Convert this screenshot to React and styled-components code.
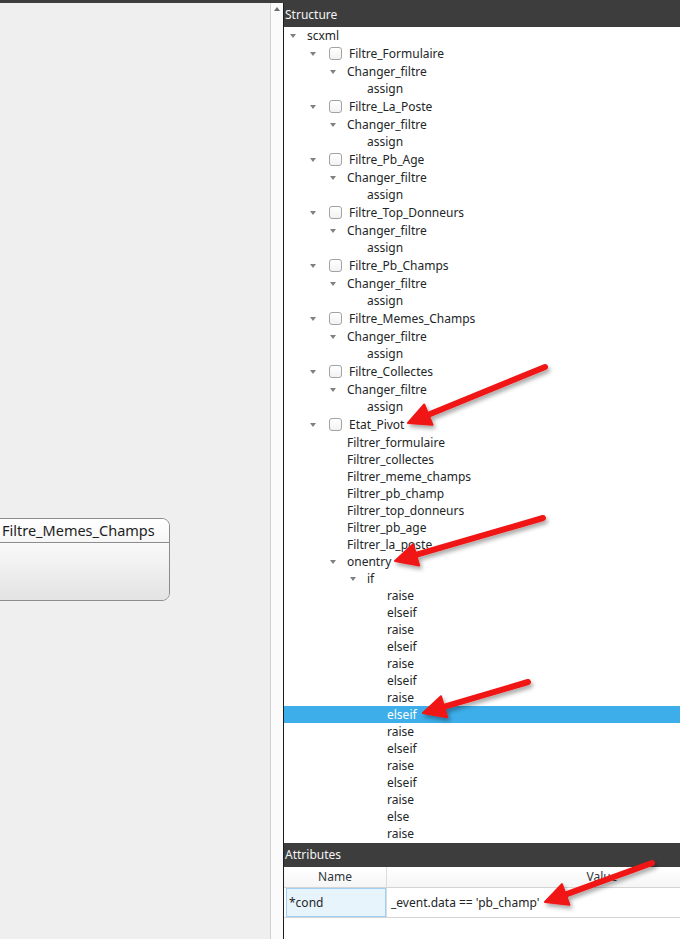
import React from "react";
import styled, { createGlobalStyle } from "styled-components";

const GlobalStyle = createGlobalStyle`
  html, body {
    margin: 0;
    padding: 0;
    background: #efefef;
  }
  body {
    font-family: "Noto Sans", "Open Sans", sans-serif;
    font-size: 12px;
    color: #232627;
  }
`;

const filters = [
  "Filtre_Formulaire",
  "Filtre_La_Poste",
  "Filtre_Pb_Age",
  "Filtre_Top_Donneurs",
  "Filtre_Pb_Champs",
  "Filtre_Memes_Champs",
  "Filtre_Collectes",
];

const pivotChildren = [
  "Filtrer_formulaire",
  "Filtrer_collectes",
  "Filtrer_meme_champs",
  "Filtrer_pb_champ",
  "Filtrer_top_donneurs",
  "Filtrer_pb_age",
  "Filtrer_la_poste",
];

const ifChildren = [
  "raise", "elseif", "raise", "elseif", "raise", "elseif", "raise", "elseif",
  "raise", "elseif", "raise", "elseif", "raise", "else", "raise",
];

const buildRows = () => {
  const rows = [{ label: "scxml", level: 0, open: true }];
  filters.forEach((f) => {
    rows.push({ label: f, level: 1, open: true, check: true });
    rows.push({ label: "Changer_filtre", level: 2, open: true });
    rows.push({ label: "assign", level: 3 });
  });
  rows.push({ label: "Etat_Pivot", level: 1, open: true, check: true });
  pivotChildren.forEach((c) => rows.push({ label: c, level: 2 }));
  rows.push({ label: "onentry", level: 2, open: true });
  rows.push({ label: "if", level: 3, open: true });
  ifChildren.forEach((c, i) => rows.push({ label: c, level: 4, selected: i === 7 }));
  return rows;
};

// annotation arrows drawn over the screenshot
const arrows = [
  { x1: 545, y1: 367, x2: 408, y2: 423 },
  { x1: 543, y1: 518, x2: 395, y2: 561 },
  { x1: 528, y1: 682, x2: 423, y2: 713 },
  { x1: 652, y1: 863, x2: 545, y2: 902 },
];

const App = () => {
  const rows = buildRows();

  return (
    <Page>
      <GlobalStyle />
      <TopStrip />
      <Main>
        <Canvas>
          <StateNode>
            <StateTitle>Filtre_Memes_Champs</StateTitle>
            <StateBody />
          </StateNode>
        </Canvas>
        <ScrollBar>
          <UpArrow />
        </ScrollBar>
        <Dock>
          <DockTitle>Structure</DockTitle>
          <Tree>
            {rows.map((r, i) => (
              <Row key={i} $level={r.level} $tall={r.check} $selected={r.selected}>
                <Expander>{r.open && <Caret />}</Expander>
                {r.check && <CheckBox />}
                <Label>{r.label}</Label>
              </Row>
            ))}
          </Tree>
          <DockTitle>Attributes</DockTitle>
          <Table>
            <HeadRow>
              <HeadCell $w={102}>Name</HeadCell>
              <HeadCell $w={430}>Value</HeadCell>
            </HeadRow>
            <DataRow>
              <NameCell>*cond</NameCell>
              <ValueCell>_event.data == 'pb_champ'</ValueCell>
            </DataRow>
          </Table>
        </Dock>
      </Main>

      <Overlay width="680" height="939" viewBox="0 0 680 939">
        <defs>
          <filter id="shadow" x="-20%" y="-40%" width="140%" height="180%">
            <feDropShadow dx="2" dy="3" stdDeviation="2" floodColor="#000" floodOpacity="0.35" />
          </filter>
        </defs>
        {arrows.map((a, i) => (
          <RedArrow key={i} {...a} />
        ))}
      </Overlay>
    </Page>
  );
};

const RedArrow = ({ x1, y1, x2, y2 }) => {
  const dx = x2 - x1;
  const dy = y2 - y1;
  const len = Math.hypot(dx, dy);
  const ux = dx / len;
  const uy = dy / len;
  const head = 22;
  const half = 11;
  const bx = x2 - ux * head;
  const by = y2 - uy * head;
  const nx = -uy;
  const ny = ux;
  const pts = `${x2},${y2} ${bx + nx * half},${by + ny * half} ${bx - nx * half},${by - ny * half}`;
  return (
    <g filter="url(#shadow)">
      <line
        x1={x1}
        y1={y1}
        x2={bx + ux * 4}
        y2={by + uy * 4}
        stroke="#f01414"
        strokeWidth="6"
        strokeLinecap="round"
      />
      <polygon points={pts} fill="#f01414" stroke="#f01414" strokeWidth="2" strokeLinejoin="round" />
    </g>
  );
};

export default App;

const Page = styled.div`
  position: relative;
  width: 680px;
  height: 939px;
  overflow: hidden;
  display: flex;
  flex-direction: column;
  background: #efefef;
`;

const TopStrip = styled.div`
  height: 3px;
  flex-shrink: 0;
  background: #3d3d3d;
`;

const Main = styled.div`
  flex: 1;
  display: flex;
  min-height: 0;
`;

const Canvas = styled.div`
  position: relative;
  width: 270px;
  flex-shrink: 0;
  background: #efefef;
`;

const StateNode = styled.div`
  position: absolute;
  left: -26px;
  top: 515px;
  width: 194px;
  height: 81px;
  border: 1px solid #8c8c8c;
  border-radius: 8px;
  overflow: hidden;
  display: flex;
  flex-direction: column;
`;

const StateTitle = styled.div`
  height: 23px;
  line-height: 23px;
  padding-left: 27px;
  font-size: 14.5px;
  color: #1e1e1e;
  background: linear-gradient(#ffffff, #f6f6f6);
  border-bottom: 1px solid #8c8c8c;
`;

const StateBody = styled.div`
  flex: 1;
  background: linear-gradient(#f9f9f9, #e3e3e3);
`;

const ScrollBar = styled.div`
  width: 13px;
  flex-shrink: 0;
  border-left: 1px solid #d0d0d0;
  background: #fbfbfb;
  display: flex;
  justify-content: center;
  padding-top: 4px;
  box-sizing: border-box;
`;

const UpArrow = styled.div`
  width: 0;
  height: 0;
  border-left: 3.5px solid transparent;
  border-right: 3.5px solid transparent;
  border-bottom: 4px solid #6e6e6e;
`;

const Dock = styled.div`
  flex: 1;
  display: flex;
  flex-direction: column;
  border-left: 1px solid #1d1d1d;
  background: #ffffff;
  min-width: 0;
`;

const DockTitle = styled.div`
  height: 24px;
  flex-shrink: 0;
  line-height: 24px;
  padding-left: 1px;
  background: #3d3d3d;
  color: #f4f4f4;
  font-size: 12px;
`;

const Tree = styled.div`
  height: 816px;
  flex-shrink: 0;
  background: #ffffff;
  overflow: hidden;
`;

const Row = styled.div`
  height: ${(p) => (p.$tall ? 19 : 17)}px;
  display: flex;
  align-items: center;
  padding-left: ${(p) => p.$level * 20}px;
  background: ${(p) => (p.$selected ? "#3daee9" : "transparent")};
  color: ${(p) => (p.$selected ? "#ffffff" : "#232627")};
  white-space: nowrap;
`;

const Expander = styled.div`
  width: 23px;
  flex-shrink: 0;
  display: flex;
  align-items: center;
  padding-left: 6px;
  box-sizing: border-box;
`;

const Caret = styled.div`
  width: 0;
  height: 0;
  border-left: 3.5px solid transparent;
  border-right: 3.5px solid transparent;
  border-top: 4px solid #7d8084;
`;

const CheckBox = styled.div`
  width: 11px;
  height: 11px;
  margin-left: 2px;
  margin-right: 7px;
  border: 1px solid #a0a2a4;
  border-radius: 3px;
  background: linear-gradient(#ffffff, #f2f2f2);
  flex-shrink: 0;
`;

const Label = styled.span`
  line-height: 17px;
`;

const Table = styled.div`
  flex: 1;
  background: #ffffff;
  overflow: hidden;
`;

const HeadRow = styled.div`
  display: flex;
  height: 20px;
  border-bottom: 1px solid #d4d4d4;
  background: linear-gradient(#ffffff, #f5f5f5);
`;

const HeadCell = styled.div`
  width: ${(p) => p.$w}px;
  flex-shrink: 0;
  text-align: center;
  line-height: 20px;
  border-right: 1px solid #dcdcdc;
  color: #31363b;
`;

const DataRow = styled.div`
  display: flex;
  height: 29px;
  border-bottom: 1px solid #d4d4d4;
`;

const NameCell = styled.div`
  width: 100px;
  flex-shrink: 0;
  margin-left: 2px;
  border: 1px solid #9fd0f2;
  background: #e8f4fc;
  line-height: 27px;
  padding-left: 2px;
  box-sizing: border-box;
`;

const ValueCell = styled.div`
  flex-shrink: 0;
  width: 430px;
  line-height: 29px;
  padding-left: 4px;
  border-left: 1px solid #dcdcdc;
`;

const Overlay = styled.svg`
  position: absolute;
  left: 0;
  top: 0;
  pointer-events: none;
`;
